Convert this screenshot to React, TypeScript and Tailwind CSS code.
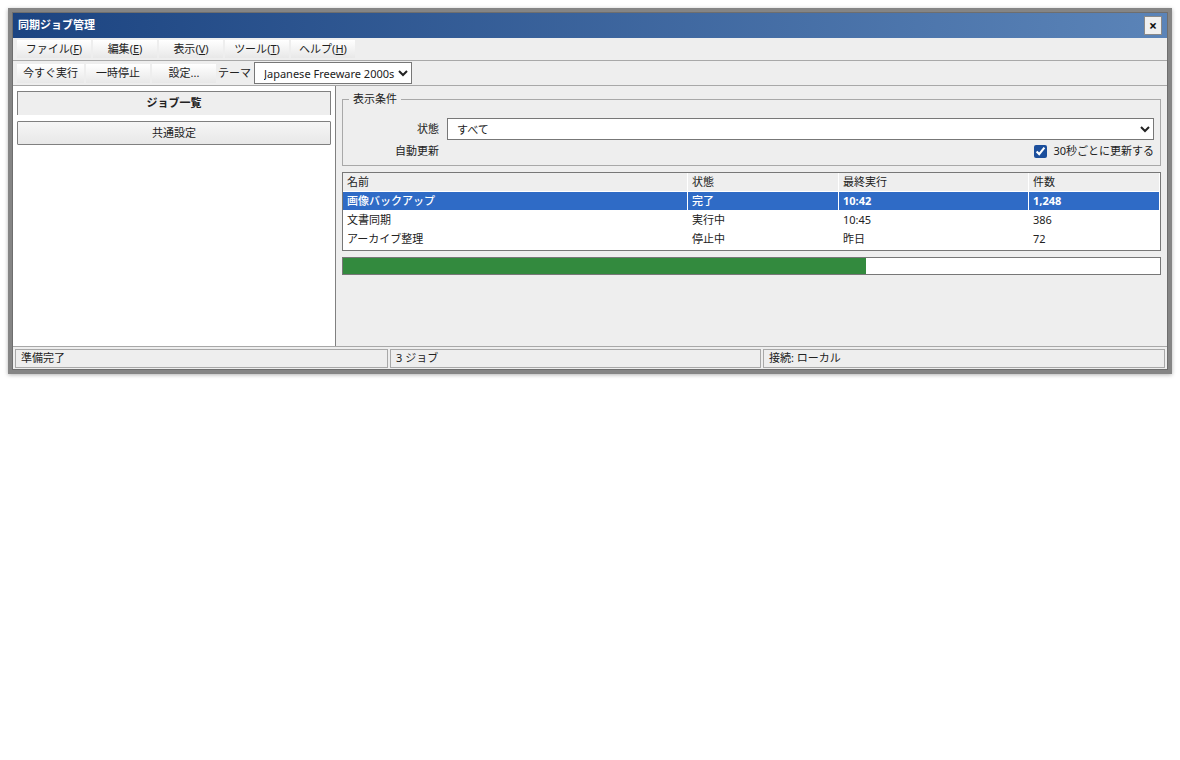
import React from "react"

const menus = [
  { label: "ファイル", key: "F" },
  { label: "編集", key: "E" },
  { label: "表示", key: "V" },
  { label: "ツール", key: "T" },
  { label: "ヘルプ", key: "H" },
]

const rows = [
  { name: "画像バックアップ", state: "完了", last: "10:42", count: "1,248" },
  { name: "文書同期", state: "実行中", last: "10:45", count: "386" },
  { name: "アーカイブ整理", state: "停止中", last: "昨日", count: "72" },
]

const font = "font-['Noto_Sans','Noto_Sans_CJK_JP',sans-serif]"

function ToolButton({ children }: { children: React.ReactNode }) {
  return (
    <button className="h-[19px] min-w-[64px] bg-gradient-to-b from-white to-[#e8e8e8] px-[6px] text-center leading-[18px] text-[#222]">
      {children}
    </button>
  )
}

export default function App() {
  return (
    <div className={`p-2 text-[11px] text-[#222] ${font}`}>
      <div className="h-[366px] border-4 border-[#858585] shadow-[0_1px_4px_rgba(0,0,0,0.3)]">
        <div className="flex h-full flex-col border border-[#6e6e6e] bg-[#eeeeee]">
          <div className="flex h-[25px] shrink-0 items-center justify-between bg-gradient-to-r from-[#1c4481] to-[#5b84b8] pl-[5px] pr-[5px]">
            <span className="font-bold text-white">同期ジョブ管理</span>
            <button className="flex h-[19px] w-[18px] items-center justify-center border border-[#8a8a8a] bg-[#f0f0f0] text-[14px] font-bold leading-none text-[#111]">
              ×
            </button>
          </div>

          <div className="flex h-[23px] shrink-0 items-end gap-[2px] border-b border-[#a8a8a8] pb-[2px] pl-1">
            {menus.map((m, i) => (
              <button
                key={m.key}
                className={`h-[18px] bg-gradient-to-b from-white to-[#e8e8e8] text-center leading-[18px] text-[#222] ${i === 0 ? "w-[74px]" : "w-[64px]"}`}
              >
                {m.label}(<span className="underline">{m.key}</span>)
              </button>
            ))}
          </div>

          <div className="flex h-[25px] shrink-0 items-center gap-[2px] border-b border-[#a8a8a8] pl-1">
            <ToolButton>今すぐ実行</ToolButton>
            <ToolButton>一時停止</ToolButton>
            <ToolButton>設定...</ToolButton>
            <span className="mr-[1px]">テーマ</span>
            <select className="h-[22px] w-[158px] border border-[#777] bg-white pl-[5px] pt-px text-[11px] text-[#222]">
              <option>Japanese Freeware 2000s</option>
            </select>
          </div>

          <div className="flex min-h-0 flex-1">
            <div className="flex w-[323px] shrink-0 flex-col gap-[6px] border-r border-[#808080] bg-white px-1 pt-[5px]">
              <div className="flex h-6 items-center justify-center border border-b-0 border-[#808080] bg-[#eeeeee] font-bold">
                ジョブ一覧
              </div>
              <button className="h-6 rounded-[1px] border border-[#808080] bg-gradient-to-b from-[#f6f6f6] to-[#e8e8e8] pt-px text-center">
                共通設定
              </button>
            </div>

            <div className="flex min-w-0 flex-1 flex-col gap-[6px] px-[6px] pt-[7px]">
              <fieldset className="h-[73px] shrink-0 border border-[#a8a8a8] pl-1 pr-[6px]">
                <legend className="ml-[2px] px-1 pb-[2px] leading-[11px]">表示条件</legend>
                <div className="mt-3 grid grid-cols-[92px_1fr] items-center gap-x-2">
                  <span className="pt-px text-right">状態</span>
                  <select className="h-[22px] w-full border border-[#777] bg-white pl-[5px] pt-px text-[11px] text-[#222]">
                    <option>すべて</option>
                  </select>
                  <span className="pt-px text-right">自動更新</span>
                  <label className="flex h-[22px] items-center justify-end gap-[6px]">
                    <input type="checkbox" defaultChecked className="m-0 h-[13px] w-[13px] accent-[#1c4f9c]" />
                    <span className="pt-px">30秒ごとに更新する</span>
                  </label>
                </div>
              </fieldset>

              <div className="shrink-0 border border-[#777] bg-white pb-px">
                <table className="w-full table-fixed border-separate border-spacing-0 text-left">
                  <colgroup>
                    <col className="w-[345px]" />
                    <col className="w-[151px]" />
                    <col className="w-[190px]" />
                    <col />
                  </colgroup>
                  <thead>
                    <tr className="h-[19px] bg-[#eeeeee]">
                      {["名前", "状態", "最終実行", "件数"].map((h) => (
                        <th key={h} className="border-r border-b border-white px-1 py-0 font-normal">{h}</th>
                      ))}
                    </tr>
                  </thead>
                  <tbody>
                    {rows.map((r, i) => (
                      <tr key={r.name} className={i === 0 ? "h-[19px] bg-[#2f6bc6] text-white" : "h-[19px]"}>
                        <td className={`px-1 py-0 ${i === 0 ? "border-r border-b border-white font-medium" : ""}`}>{r.name}</td>
                        <td className={`px-1 py-0 ${i === 0 ? "border-r border-b border-white font-medium" : ""}`}>{r.state}</td>
                        <td className={`px-1 py-0 ${i === 0 ? "border-r border-b border-white font-bold" : ""}`}>{r.last}</td>
                        <td className={`px-1 py-0 ${i === 0 ? "border-r border-b border-white font-bold" : ""}`}>{r.count}</td>
                      </tr>
                    ))}
                  </tbody>
                </table>
              </div>

              <div className="h-[18px] shrink-0 border border-[#777] bg-white">
                <div className="h-full bg-[#338a3e]" style={{ width: "64%" }} />
              </div>
            </div>
          </div>

          <div className="flex h-[23px] shrink-0 items-start gap-[2px] border-t border-[#a8a8a8] px-[2px] pt-[2px]">
            <div className="flex h-[19px] w-[373px] items-center border border-[#a8a8a8] pl-[5px]">準備完了</div>
            <div className="flex h-[19px] w-[371px] items-center border border-[#a8a8a8] pl-[5px]">3 ジョブ</div>
            <div className="flex h-[19px] flex-1 items-center border border-[#a8a8a8] pl-[5px]">接続: ローカル</div>
          </div>
        </div>
      </div>
    </div>
  )
}
